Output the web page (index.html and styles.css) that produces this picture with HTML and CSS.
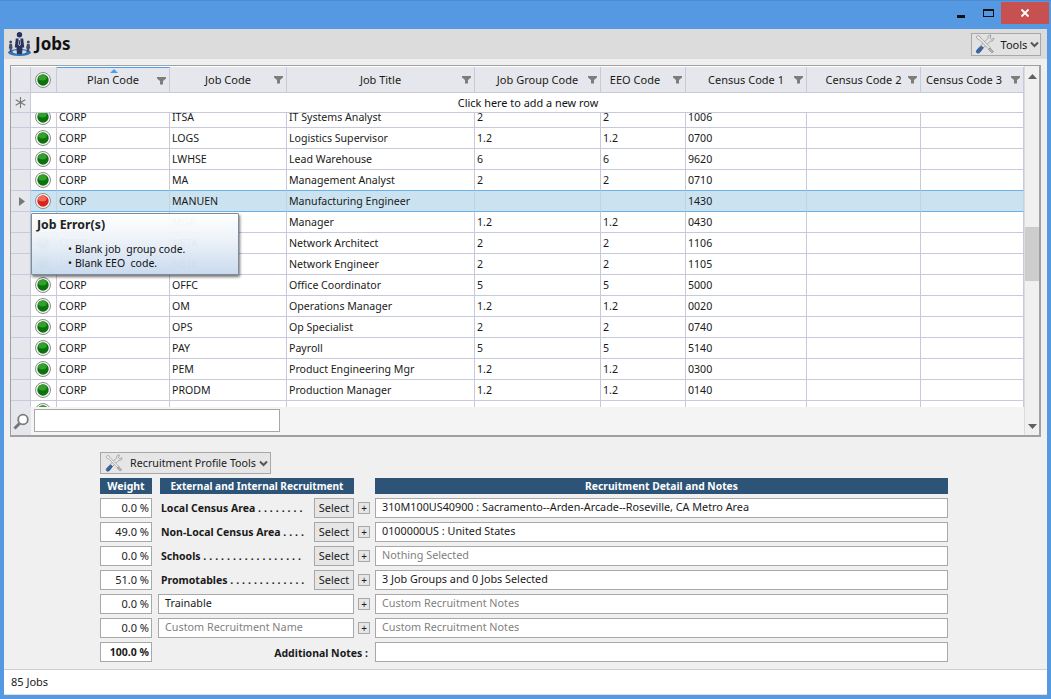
FILE: index.html
```html
<!DOCTYPE html>
<html lang="en">
<head>
<meta charset="utf-8">
<title>Jobs</title>
<link rel="stylesheet" href="styles.css">
</head>
<body>
<svg class="defs" width="0" height="0" aria-hidden="true">
  <defs>
    <symbol id="funnel" viewBox="0 0 9 9"><path d="M0 1h9v1.400L6 5v3.500H3V5L0 2.400z" fill="#7d7d7d"/></symbol>
    <symbol id="tools" viewBox="0 0 20 20">
      <path d="M16 1c-2-.3-3.500 1.300-3 3.300L3.500 14l2.300 2.300L15.500 7c2 .5 3.700-1 3.400-3l-2.200 1.500-1.700-1.500z" fill="#e4e4e4" stroke="#8a8a8a" stroke-width=".7"/>
      <path d="M2.500 1.500 1.300 3l1.200 2 1.700.5 10 10 1.500-1.500-10-10L5 2.500z" fill="#efefef" stroke="#8a8a8a" stroke-width=".7"/>
      <path d="M15 14l3.500 3.500-1.500 1.500-3.500-3.500z" fill="#b4b4b4" stroke="#808080" stroke-width=".6"/>
      <path d="M6.500 12 8.300 13.800 5 18.300c-.8.900-2.500 1.100-3.200.4s-.5-2.200.2-3z" fill="#3566ad" stroke="#1f3f75" stroke-width=".6"/>
    </symbol>
    <symbol id="chev" viewBox="0 0 9 7"><path d="M1 1.500 4.500 5 8 1.500" fill="none" stroke="#555" stroke-width="2"/></symbol>
    <symbol id="led-g" viewBox="0 0 16 16">
      <circle cx="8" cy="8" r="7.500" fill="#f6f6f6" stroke="#8d8d8d"/>
      <circle cx="8" cy="8" r="5.700" fill="#0c720e"/>
      <ellipse cx="7.400" cy="5.600" rx="4.300" ry="2.900" fill="#33a02c"/>
    </symbol>
    <symbol id="led-r" viewBox="0 0 16 16">
      <circle cx="8" cy="8" r="7.500" fill="#f6f6f6" stroke="#8d8d8d"/>
      <circle cx="8" cy="8" r="5.700" fill="#d8241a"/>
      <ellipse cx="7.400" cy="5.600" rx="4.300" ry="2.900" fill="#f2685a"/>
    </symbol>
  </defs>
</svg>
<div class="window">
  <div class="titlebar">
    <span class="win-min"></span>
    <span class="win-max"></span>
    <span class="win-close">
      <svg width="10" height="10" viewBox="0 0 10 10"><path d="M1.500 1.500l7 7M8.500 1.500l-7 7" stroke="#fff" stroke-width="1.800"/></svg>
    </span>
  </div>
  <div class="pagehead">
    <svg class="jobs-icon" width="25" height="26" viewBox="0 0 25 26">
      <ellipse cx="12.500" cy="21.500" rx="11.500" ry="3.500" fill="#2f72bb"/>
      <ellipse cx="12.500" cy="20.800" rx="7" ry="1.900" fill="#dcdcdc"/>
      <circle cx="12.500" cy="3.800" r="2.700" fill="#28345e"/>
      <path d="M8.800 7.500h7.400l1 9h-1.700l-.4 6.500h-5.200l-.4-6.500H7.800z" fill="#28345e"/>
      <path d="M11.300 7.500h2.400l-.4 1.500.5 4.500-1.300 1.500-1.300-1.500.5-4.500z" fill="#f2f2f2"/>
      <path d="M12.200 9h.6l.4 4.300-.7.800-.7-.8z" fill="#28345e"/>
      <circle cx="3.700" cy="11" r="1.500" fill="#414b6b"/>
      <path d="M2.400 13H5l.6 4.500h-.8l-.3 3.500H2.900l-.3-3.500h-.8z" fill="#414b6b"/>
      <circle cx="21.300" cy="11" r="1.500" fill="#414b6b"/>
      <path d="M20 13h2.600l.6 4.500h-.8l-.3 3.500h-2l-.3-3.500h-.8z" fill="#414b6b"/>
    </svg>
    <h1 class="pagetitle">Jobs</h1>
    <button class="tools-btn"><svg width="20" height="20"><use href="#tools"/></svg><span class="tools-label">Tools</span><svg width="9" height="7"><use href="#chev"/></svg></button>
  </div>
  <div class="content">
    <div class="gridbox">
      <div class="grid-main">
        <div class="row head">
          <div class="c ind"></div>
          <div class="c st"><svg width="16" height="16"><use href="#led-g"/></svg></div>
          <div class="c h sorted"><span class="hl">Plan Code</span><svg class="fn" width="9" height="9"><use href="#funnel"/></svg></div>
          <div class="c h"><span class="hl">Job Code</span><svg class="fn" width="9" height="9"><use href="#funnel"/></svg></div>
          <div class="c h"><span class="hl">Job Title</span><svg class="fn" width="9" height="9"><use href="#funnel"/></svg></div>
          <div class="c h"><span class="hl">Job Group Code</span><svg class="fn" width="9" height="9"><use href="#funnel"/></svg></div>
          <div class="c h tight"><span class="hl">EEO Code</span><svg class="fn" width="9" height="9"><use href="#funnel"/></svg></div>
          <div class="c h"><span class="hl">Census Code 1</span><svg class="fn" width="9" height="9"><use href="#funnel"/></svg></div>
          <div class="c h"><span class="hl">Census Code 2</span><svg class="fn" width="9" height="9"><use href="#funnel"/></svg></div>
          <div class="c h tight"><span class="hl">Census Code 3</span><svg class="fn" width="9" height="9"><use href="#funnel"/></svg></div>
        </div>
        <div class="newrow">
          <div class="ind-new"><svg width="11" height="11" viewBox="0 0 11 11"><path d="M5.500 0v11M.7 2.700l9.600 5.600M.7 8.300l9.600-5.600" stroke="#777" stroke-width="1.100"/></svg></div>
          <div class="newtext">Click here to add a new row</div>
        </div>
        <div class="rows">
          <div class="rows-inner">
            <div class="row"><div class="c ind"></div><div class="c st"><svg width="16" height="16"><use href="#led-g"/></svg></div><div class="c">CORP</div><div class="c">ITSA</div><div class="c">IT Systems Analyst</div><div class="c">2</div><div class="c">2</div><div class="c">1006</div><div class="c"></div><div class="c"></div></div>
            <div class="row"><div class="c ind"></div><div class="c st"><svg width="16" height="16"><use href="#led-g"/></svg></div><div class="c">CORP</div><div class="c">LOGS</div><div class="c">Logistics Supervisor</div><div class="c">1.2</div><div class="c">1.2</div><div class="c">0700</div><div class="c"></div><div class="c"></div></div>
            <div class="row"><div class="c ind"></div><div class="c st"><svg width="16" height="16"><use href="#led-g"/></svg></div><div class="c">CORP</div><div class="c">LWHSE</div><div class="c">Lead Warehouse</div><div class="c">6</div><div class="c">6</div><div class="c">9620</div><div class="c"></div><div class="c"></div></div>
            <div class="row before-sel"><div class="c ind"></div><div class="c st"><svg width="16" height="16"><use href="#led-g"/></svg></div><div class="c">CORP</div><div class="c">MA</div><div class="c">Management Analyst</div><div class="c">2</div><div class="c">2</div><div class="c">0710</div><div class="c"></div><div class="c"></div></div>
            <div class="row selected"><div class="c ind"><svg width="6" height="9" viewBox="0 0 6 9"><path d="M0 0l6 4.500L0 9z" fill="#777"/></svg></div><div class="c st"><svg width="16" height="16"><use href="#led-r"/></svg></div><div class="c">CORP</div><div class="c">MANUEN</div><div class="c">Manufacturing Engineer</div><div class="c"></div><div class="c"></div><div class="c">1430</div><div class="c"></div><div class="c"></div></div>
            <div class="row"><div class="c ind"></div><div class="c st"><svg width="16" height="16"><use href="#led-g"/></svg></div><div class="c">CORP</div><div class="c">MGR</div><div class="c">Manager</div><div class="c">1.2</div><div class="c">1.2</div><div class="c">0430</div><div class="c"></div><div class="c"></div></div>
            <div class="row"><div class="c ind"></div><div class="c st"><svg width="16" height="16"><use href="#led-g"/></svg></div><div class="c">CORP</div><div class="c">NETA</div><div class="c">Network Architect</div><div class="c">2</div><div class="c">2</div><div class="c">1106</div><div class="c"></div><div class="c"></div></div>
            <div class="row"><div class="c ind"></div><div class="c st"><svg width="16" height="16"><use href="#led-g"/></svg></div><div class="c">CORP</div><div class="c">NETE</div><div class="c">Network Engineer</div><div class="c">2</div><div class="c">2</div><div class="c">1105</div><div class="c"></div><div class="c"></div></div>
            <div class="row"><div class="c ind"></div><div class="c st"><svg width="16" height="16"><use href="#led-g"/></svg></div><div class="c">CORP</div><div class="c">OFFC</div><div class="c">Office Coordinator</div><div class="c">5</div><div class="c">5</div><div class="c">5000</div><div class="c"></div><div class="c"></div></div>
            <div class="row"><div class="c ind"></div><div class="c st"><svg width="16" height="16"><use href="#led-g"/></svg></div><div class="c">CORP</div><div class="c">OM</div><div class="c">Operations Manager</div><div class="c">1.2</div><div class="c">1.2</div><div class="c">0020</div><div class="c"></div><div class="c"></div></div>
            <div class="row"><div class="c ind"></div><div class="c st"><svg width="16" height="16"><use href="#led-g"/></svg></div><div class="c">CORP</div><div class="c">OPS</div><div class="c">Op Specialist</div><div class="c">2</div><div class="c">2</div><div class="c">0740</div><div class="c"></div><div class="c"></div></div>
            <div class="row"><div class="c ind"></div><div class="c st"><svg width="16" height="16"><use href="#led-g"/></svg></div><div class="c">CORP</div><div class="c">PAY</div><div class="c">Payroll</div><div class="c">5</div><div class="c">5</div><div class="c">5140</div><div class="c"></div><div class="c"></div></div>
            <div class="row"><div class="c ind"></div><div class="c st"><svg width="16" height="16"><use href="#led-g"/></svg></div><div class="c">CORP</div><div class="c">PEM</div><div class="c">Product Engineering Mgr</div><div class="c">1.2</div><div class="c">1.2</div><div class="c">0300</div><div class="c"></div><div class="c"></div></div>
            <div class="row"><div class="c ind"></div><div class="c st"><svg width="16" height="16"><use href="#led-g"/></svg></div><div class="c">CORP</div><div class="c">PRODM</div><div class="c">Production Manager</div><div class="c">1.2</div><div class="c">1.2</div><div class="c">0140</div><div class="c"></div><div class="c"></div></div>
            <div class="row"><div class="c ind"></div><div class="c st"><svg width="16" height="16"><use href="#led-g"/></svg></div><div class="c"></div><div class="c"></div><div class="c"></div><div class="c"></div><div class="c"></div><div class="c"></div><div class="c"></div><div class="c"></div></div>
          </div>
        </div>
        <div class="filterbar">
          <div class="search-ic"><svg width="16" height="17" viewBox="0 0 16 17"><circle cx="10" cy="6.500" r="4.800" fill="#fff" stroke="#7d7d7d" stroke-width="1.800"/><path d="M6.500 10.500 1.500 15.500" stroke="#757575" stroke-width="3"/></svg></div>
          <div class="filter-input"></div>
        </div>
      </div>
      <div class="scrollbar">
        <svg class="sb-arrow" width="9" height="5" viewBox="0 0 9 5"><path d="M4.500 0 9 5H0z" fill="#606060"/></svg>
        <div class="sb-track"><div class="sb-thumb"></div></div>
        <svg class="sb-arrow" width="9" height="5" viewBox="0 0 9 5"><path d="M0 0h9L4.500 5z" fill="#606060"/></svg>
      </div>
      <div class="tooltip">
        <div class="tip-title">Job Error(s)</div>
        <ul class="tip-list">
          <li>Blank job&nbsp; group code.</li>
          <li>Blank EEO&nbsp; code.</li>
        </ul>
      </div>
    </div>
    <div class="profile">
      <button class="rp-btn"><svg width="18" height="18"><use href="#tools"/></svg><span class="rp-label">Recruitment Profile Tools</span><svg width="9" height="7"><use href="#chev"/></svg></button>
      <div class="form">
        <div class="fh f-w">Weight</div><div class="fh f-e">External and Internal Recruitment</div><div class="fh f-d">Recruitment Detail and Notes</div>

        <div class="inp pct">0.0 %</div><div class="lab">Local Census Area <span class="dots">. . . . . . . .</span></div><button class="sel">Select</button><button class="plus">+</button><div class="inp det">310M100US40900 : Sacramento--Arden-Arcade--Roseville, CA Metro Area</div>

        <div class="inp pct">49.0 %</div><div class="lab">Non-Local Census Area <span class="dots">. . . .</span></div><button class="sel">Select</button><button class="plus">+</button><div class="inp det">0100000US : United States</div>

        <div class="inp pct">0.0 %</div><div class="lab">Schools <span class="dots">. . . . . . . . . . . . . . . . .</span></div><button class="sel">Select</button><button class="plus">+</button><div class="inp det ph">Nothing Selected</div>

        <div class="inp pct">51.0 %</div><div class="lab">Promotables <span class="dots">. . . . . . . . . . . . .</span></div><button class="sel">Select</button><button class="plus">+</button><div class="inp det">3 Job Groups and 0 Jobs Selected</div>

        <div class="inp pct">0.0 %</div><div class="inp name">Trainable</div><button class="plus">+</button><div class="inp det ph">Custom Recruitment Notes</div>

        <div class="inp pct">0.0 %</div><div class="inp name ph">Custom Recruitment Name</div><button class="plus">+</button><div class="inp det ph">Custom Recruitment Notes</div>

        <div class="inp pct total">100.0 %</div><div class="addl">Additional Notes :</div><div class="inp det"></div>
      </div>
    </div>
  </div>
  <div class="statusbar">85 Jobs</div>
</div>
</body>
</html>
```

FILE: styles.css
```css
* { box-sizing: border-box; }
html, body { margin: 0; padding: 0; }
body { width: 1051px; height: 699px; overflow: hidden; font-family: "Noto Sans", "Open Sans", sans-serif; font-size: 11px; color: #1a1a1a; }
.defs { position: absolute; }
button { font: inherit; color: inherit; padding: 0; margin: 0; }

.window { width: 1051px; height: 699px; background: #5599e2; padding: 0 4px 4px; display: flex; flex-direction: column; border-top: 1px solid #4d8ccf; }

.titlebar { height: 28px; flex: none; display: flex; justify-content: flex-end; align-items: flex-start; }
.win-min { width: 8px; height: 3px; background: #111; margin: 14px 18px 0 0; }
.win-max { width: 11px; height: 8px; border: 1px solid #111; border-top-width: 2px; margin: 8px 7px 0 0; }
.win-close { width: 48px; height: 22px; background: #c75050; margin: 1px -2px 0 0; display: flex; align-items: center; justify-content: center; }

.pagehead { height: 30px; flex: none; background: #dcdcdc; display: flex; align-items: center; padding: 0 6px 0 3px; }
.jobs-icon { flex: none; }
.pagetitle { margin: 0 0 0 3px; font-size: 17px; font-weight: 700; color: #111; flex: 1; line-height: 30px; }
.tools-btn { width: 70px; height: 23px; background: #e2e2e2; border: 1px solid #a8a8a8; display: flex; align-items: center; padding: 0 1px 0 3px; }
.tools-label { flex: 1; text-align: center; padding-left: 3px; }

.content { flex: 1; background: #f0f0f0; display: flex; flex-direction: column; padding: 6px 6px 0; min-height: 0; }

.gridbox { height: 372px; flex: none; border: 2px solid #a0a0a0; border-width: 1px 2px 2px 1px; background: #f4f4f4; display: flex; position: relative; }
.grid-main { width: 1013px; flex: none; display: flex; flex-direction: column; }

.row { display: grid; grid-template-columns: 20px 26px 113px 117px 188px 126px 85px 121px 114px 103px; height: 21px; }
.c { border-right: 1px solid #c9c9dc; border-bottom: 1px solid #c9c9dc; padding: 0 3px 0 2px; line-height: 20px; background: #fff; white-space: nowrap; overflow: hidden; font-size: 10.600px; }
.c.ind { background: #e6e7ec; display: flex; align-items: center; justify-content: center; padding: 0 0 0 2px; }
.c.st { display: flex; align-items: center; justify-content: center; padding: 0 1px 0 0; }

.head { height: 27px; padding-top: 1px; background: #fff; }
.head .c { background: #e6e7ec; }
.h { display: flex; align-items: center; position: relative; padding: 0 3px 0 0; font-size: 11px; }
.hl { flex: 1; text-align: center; padding-left: 12px; }
.tight .hl { padding-left: 0; padding-right: 4px; }
.fn { flex: none; }
.sorted { border-top: 1px solid #49a0ee; }
.sorted::before { content: ""; position: absolute; left: 53px; top: 1px; border: 4px solid transparent; border-top: 0; border-bottom: 4px solid #49a0ee; }

.newrow { height: 20px; flex: none; display: flex; background: #fff; }
.ind-new { width: 20px; background: #e6e7ec; display: flex; align-items: center; justify-content: center; border-right: 1px solid #c9c9dc; border-bottom: 1px solid #c9c9dc; }
.newtext { flex: 1; text-align: center; line-height: 19px; border: 1px solid #c9c9dc; border-width: 0 1px 1px 0; color: #111; font-size: 10.900px; padding-left: 2px; }

.rows { height: 294px; flex: none; overflow: hidden; background: #fff; }
.rows-inner { margin-top: -6px; }

.selected .c { background: #cbe2f0; border-bottom-color: #6bb0e6; border-right-color: #c0d4e6; }
.selected .c.ind { background: #e6e7ec; border-bottom-color: #c9c9dc; }
.before-sel .c:not(.ind) { border-bottom-color: #6bb0e6; }

.filterbar { flex: 1; display: flex; background: #f4f4f4; }
.search-ic { width: 20px; background: #e6e7ec; display: flex; align-items: center; justify-content: center; }
.filter-input { width: 246px; height: 23px; margin: 2px 0 0 3px; background: #fff; border: 1px solid #a8a8a8; }

.scrollbar { flex: 1; background: #f0f0f0; display: flex; flex-direction: column; align-items: center; border-left: 1px solid #dcdcdc; padding: 8px 0 6px; }
.sb-track { flex: 1; width: 100%; padding-top: 148px; }
.sb-thumb { height: 54px; background: #cdcdcd; }

.tooltip { position: absolute; left: 20px; top: 147px; width: 208px; height: 62px; border: 1px solid #7e8d9d; border-radius: 1px; background: linear-gradient(#fffffff8, #eef3f9f8 40%, #c9daeefa); box-shadow: 1px 2px 3px #0000008a; padding: 2px 5px; color: #111; }
.tip-title { font-weight: 700; font-size: 12.300px; line-height: 17px; color: #222; }
.tip-list { margin: 9px 0 0; padding: 0 0 0 31px; font-size: 10.500px; line-height: 14px; list-style: none; }
.tip-list li::before { content: "•"; margin-right: 3px; }

.profile { padding: 15px 0 0 90px; flex: 1; }
.rp-btn { width: 171px; height: 22px; background: #e6e6e6; border: 1px solid #a8a8a8; display: flex; align-items: center; padding: 0 2px 0 4px; }
.rp-label { flex: 1; text-align: center; padding-left: 4px; white-space: nowrap; font-size: 10.700px; }

.form { display: grid; grid-template-columns: 52px 162px 40px 16px 578px; grid-template-rows: 16px; grid-auto-rows: 20px; row-gap: 4px; margin-top: 4px; font-size: 10.800px; }
.fh { background: #2d5376; color: #fff; font-weight: 700; text-align: center; line-height: 16px; height: 16px; font-size: 10.500px; }
.f-w { grid-column: 1; }
.f-e { grid-column: 2 / 5; margin-left: 8px; margin-right: 16px; font-size: 10.100px; }
.f-d { grid-column: 5; margin-left: 5px; font-size: 10.300px; }
.inp { background: #fff; border: 1px solid #a8a8a8; height: 20px; line-height: 16px; padding: 0 6px; white-space: nowrap; overflow: hidden; }
.pct { text-align: right; padding: 0 2px 0 0; font-size: 11px; line-height: 18px; }
.total { font-weight: 700; font-size: 10.500px; line-height: 19px; }
.lab { font-weight: 700; margin-left: 8px; padding-left: 1px; line-height: 20px; white-space: nowrap; overflow: hidden; font-size: 10.500px; }
.dots { letter-spacing: .12px; }
.sel { width: 40px; height: 20px; background: #e6e6e6; border: 1px solid #a8a8a8; font-size: 11px; padding-bottom: 2px; }
.plus { width: 12px; height: 12px; align-self: center; justify-self: end; background: #e6e6e6; border: 1px solid #a8a8a8; line-height: 9px; font-size: 10px; }
.det { grid-column: 5; margin-left: 5px; }
.name { grid-column: 2 / 4; margin-left: 6px; }
.addl { grid-column: 2 / 5; text-align: right; font-weight: 700; line-height: 22px; padding-right: 2px; font-size: 10.500px; }
.ph { color: #7f7f7f; }

.statusbar { height: 26px; flex: none; background: #fff; border-top: 1px solid #d0d0d0; padding-left: 7px; line-height: 24px; border-bottom: 1px solid #e0e0e0; }
```
